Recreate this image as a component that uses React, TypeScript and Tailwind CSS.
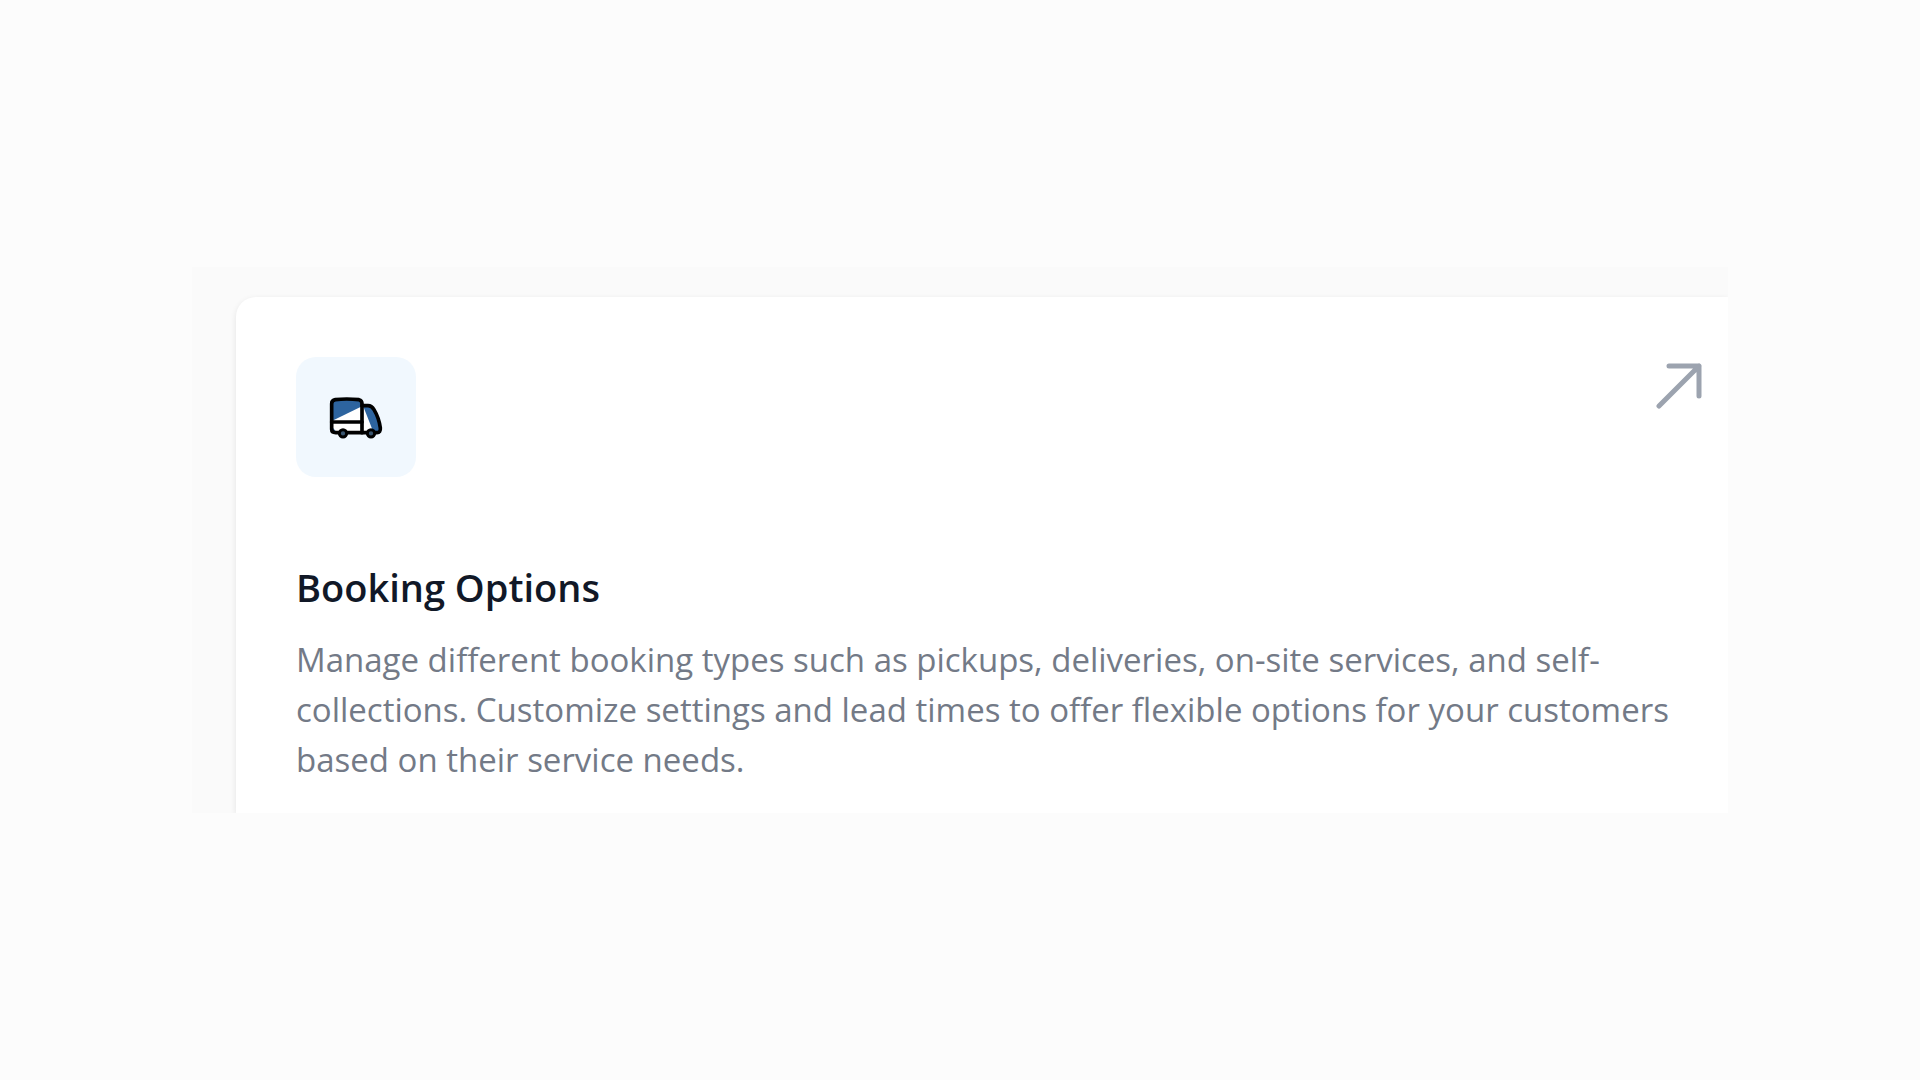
function TruckIcon() {
  return (
    <svg viewBox="56 50 162 126" className="mt-0.5 h-[42px] w-[54px]" aria-hidden="true">
      {/* Cargo box */}
      <path d="M64 70Q64 60 75 58Q108 54 146 58Q154 60 155 70V157H76Q64 157 64 145Z" fill="#fff" />
      <path d="M64 70Q64 60 75 58Q108 54 146 58Q154 60 155 70V78L66 121Z" fill="#2d649f" />
      <path d="M64 138L80 157H70L64 150Z" fill="#2d649f" />
      {/* Cab */}
      <path d="M155 76H173Q184 76 191 88Q206 113 210 148Q211 157 200 157H155Z" fill="#fff" />
      <path d="M158 76H173Q184 76 191 88Q206 113 210 148Q211 157 200 157H190Z" fill="#2d649f" />
      <g fill="none" stroke="#000" strokeWidth="11" strokeLinecap="round" strokeLinejoin="round">
        <path d="M64 70Q64 60 75 58Q108 54 146 58Q155 60 155 70V157H76Q64 157 64 147Z" />
        <path d="M64 125H155" />
        <path d="M155 76H173Q184 76 191 88Q206 113 210 143Q211 157 200 157H155" />
      </g>
      <circle cx="98" cy="159" r="11" fill="#39556f" stroke="#000" strokeWidth="9" />
      <circle cx="182" cy="159" r="11" fill="#39556f" stroke="#000" strokeWidth="9" />
    </svg>
  )
}

function ArrowIcon() {
  return (
    <svg
      viewBox="0 0 46 46"
      className="size-[46px]"
      fill="none"
      stroke="currentColor"
      strokeWidth="5"
      strokeLinecap="round"
      strokeLinejoin="round"
      aria-hidden="true"
    >
      <path d="M3 43L43 3M13 3H43V33" />
    </svg>
  )
}

export default function App() {
  return (
    <div className="flex min-h-screen items-center bg-[#fcfcfc] px-[10%] font-['Open_Sans','Noto_Sans',sans-serif]">
      <main className="w-full overflow-hidden bg-[#fafafa] pt-[30px] pl-11">
        <article className="rounded-tl-[20px] bg-white pt-[60px] pr-[26px] pb-7 pl-[60px] shadow-[0_2px_6px_rgba(0,0,0,0.09)]">
          <div className="flex items-start justify-between">
            <div className="flex size-[120px] items-center justify-center rounded-[20px] bg-[#f1f8fe]">
              <TruckIcon />
            </div>
            <a href="#booking-options" aria-label="Open booking options" className="mt-1.5 text-[#9ca3af]">
              <ArrowIcon />
            </a>
          </div>

          <h2 className="mt-20 text-[38px] leading-[60px] font-semibold text-[#111827]">
            Booking Options
          </h2>
          <p className="mt-[18px] text-[33px] leading-[50px] text-[#737a87]">
            Manage different booking types such as pickups, deliveries, on-site services, and self-collections.
            Customize settings and lead times to offer flexible options for your customers based on their
            service needs.
          </p>
        </article>
      </main>
    </div>
  )
}
